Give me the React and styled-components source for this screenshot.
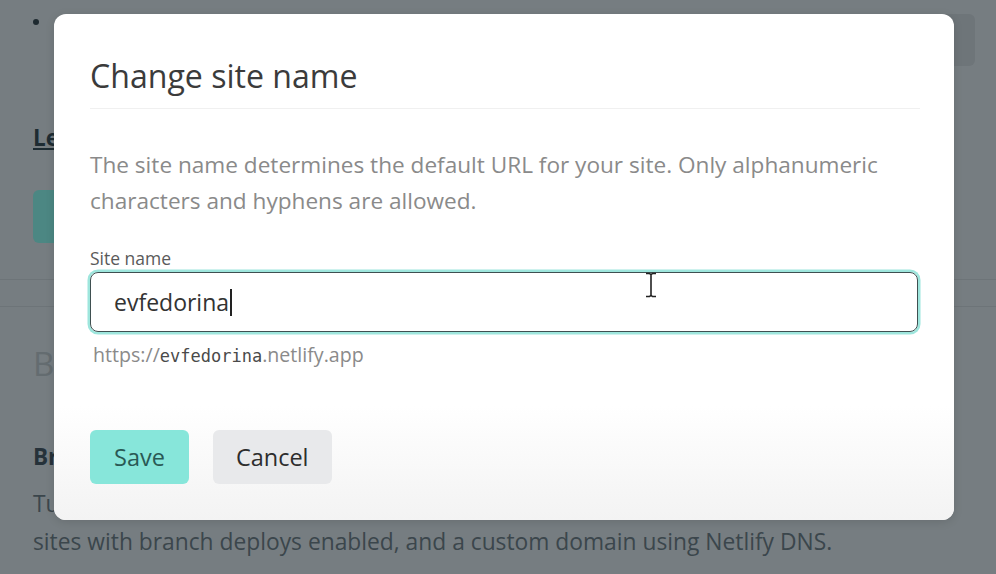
import React from "react";
import styled, { createGlobalStyle } from "styled-components";

const GlobalStyle = createGlobalStyle`
  * { box-sizing: border-box; }
  html, body { margin: 0; padding: 0; }
  body {
    width: 996px;
    height: 574px;
    overflow: hidden;
    background: #767d81;
    font-family: "Open Sans", "Noto Sans", sans-serif;
  }
`;

const Page = styled.div`
  position: relative;
  width: 996px;
  height: 574px;
  background: #767d81;
  color: #2c363b;
  overflow: hidden;
`;

const Section = styled.div`
  padding: 0 21px 0 33px;
  border-bottom: ${(p) => (p.divider ? "1px solid #6d7478" : "none")};
  height: ${(p) => p.h || "auto"};
`;

const TopRow = styled.div`
  display: flex;
  align-items: flex-start;
  padding-top: 14px;
  height: 66px;
`;

const Bullet = styled.div`
  flex: 1;
  display: flex;
  align-items: center;
  gap: 22px;
  font-size: 22px;
  line-height: 16px;
  color: #2c363b;
  &::before {
    content: "";
    width: 6px;
    height: 6px;
    border-radius: 50%;
    background: #1e2a30;
  }
`;

const GhostBox = styled.div`
  width: 160px;
  height: 52px;
  border-radius: 6px;
  background: #6e7579;
`;

const LearnLink = styled.a`
  display: block;
  margin-top: 57px;
  font-size: 22.5px;
  font-weight: 700;
  color: #1e2c33;
  text-decoration: underline;
  line-height: 30px;
`;

const GhostButton = styled.div`
  margin-top: 37px;
  width: 120px;
  height: 53px;
  border-radius: 6px;
  background: #4c8783;
  margin-bottom: 36px;
`;

const Heading = styled.h2`
  margin: 35px 0 0;
  font-size: 33px;
  font-weight: 400;
  color: #646c70;
  line-height: 44px;
`;

const SubHeading = styled.h3`
  margin: 56px 0 0;
  font-size: 22.5px;
  font-weight: 700;
  color: #26323a;
  line-height: 30px;
`;

const Copy = styled.p`
  margin: 13px 0 0;
  font-size: 22.8px;
  line-height: 38px;
  color: #3b464c;
  white-space: nowrap;
`;

const Modal = styled.div`
  position: absolute;
  left: 54px;
  top: 14px;
  width: 900px;
  height: 506px;
  border-radius: 12px;
  background: #ffffff;
  display: flex;
  flex-direction: column;
  overflow: hidden;
  box-shadow: 0 2px 10px rgba(0, 0, 0, 0.12);
`;

const Header = styled.div`
  margin: 0 34px 0 36px;
  padding: 42px 0 12px;
  border-bottom: 1px solid #f0f0f0;
`;

const Title = styled.h1`
  margin: 0;
  font-size: 32.1px;
  font-weight: 400;
  line-height: 40px;
  color: #3b3b3b;
`;

const Body = styled.div`
  padding: 38px 36px 0;
`;

const Lead = styled.p`
  margin: 0;
  font-size: 22.6px;
  line-height: 36px;
  color: #8a8a8a;
`;

const Label = styled.label`
  display: block;
  margin-top: 28px;
  font-size: 17.5px;
  line-height: 22px;
  color: #5a5a5a;
`;

const Field = styled.div`
  position: relative;
  margin-top: 3px;
  height: 60px;
  border: 1.5px solid #3f5051;
  border-radius: 8px;
  box-shadow: 0 0 0 2.5px #9ee6dd;
  display: flex;
  align-items: center;
  padding: 0 23px;
  font-size: 23px;
  color: #333;
`;

const Caret = styled.span`
  display: inline-block;
  width: 1.5px;
  height: 27px;
  margin-left: 1px;
  background: #222;
`;

const Hint = styled.div`
  margin-top: 11px;
  padding-left: 3px;
  font-size: 19.6px;
  line-height: 24px;
  color: #8a8a8a;
`;

const Mono = styled.span`
  font-family: "DejaVu Sans Mono", "Liberation Mono", monospace;
  font-size: 17px;
  color: #4a4a4a;
`;

const Footer = styled.div`
  margin-top: auto;
  padding: 0 36px 36px;
  height: 160px;
  display: flex;
  align-items: flex-end;
  gap: 24px;
  background: linear-gradient(#ffffff 0%, #ffffff 25%, #f3f3f3 100%);
`;

const Button = styled.button`
  height: 54px;
  padding: 0 ${(p) => (p.primary ? "24px" : "23px")};
  border: none;
  border-radius: 6px;
  font-family: inherit;
  font-size: 23.5px;
  background: ${(p) => (p.primary ? "#87e6da" : "#e8e9eb")};
  color: ${(p) => (p.primary ? "#2a5955" : "#2d2d2d")};
`;

const Pointer = styled.svg`
  position: absolute;
  left: 554px;
  top: -1px;
`;

export default function App() {
  return (
    <>
      <GlobalStyle />
      <Page>
        <Section divider>
          <TopRow>
            <Bullet>Preview changes on every deploy with Netlify</Bullet>
            <GhostBox />
          </TopRow>
          <LearnLink>Learn more about deploy settings</LearnLink>
          <GhostButton />
        </Section>
        <Section divider h="27px" />
        <Section>
          <Heading>Branches</Heading>
          <SubHeading>Branch subdomains</SubHeading>
          <Copy>
            Turn on branch subdomains for your production branch deploys on
            <br />
            sites with branch deploys enabled, and a custom domain using Netlify DNS.
          </Copy>
        </Section>

        <Modal>
          <Header>
            <Title>Change site name</Title>
          </Header>
          <Body>
            <Lead>
              The site name determines the default URL for your site. Only alphanumeric
              characters and hyphens are allowed.
            </Lead>
            <Label>Site name</Label>
            <Field>
              evfedorina
              <Caret />
              <Pointer width="12" height="26" viewBox="0 0 12 26">
                <path
                  d="M1 1.5h3.5l1.5 1.2 1.5-1.2H11M6 2.7v20.6M1 24.5h3.5l1.5-1.2 1.5 1.2H11"
                  fill="none"
                  stroke="#222"
                  strokeWidth="1.6"
                />
              </Pointer>
            </Field>
            <Hint>
              https://<Mono>evfedorina</Mono>.netlify.app
            </Hint>
          </Body>
          <Footer>
            <Button primary>Save</Button>
            <Button>Cancel</Button>
          </Footer>
        </Modal>
      </Page>
    </>
  );
}
